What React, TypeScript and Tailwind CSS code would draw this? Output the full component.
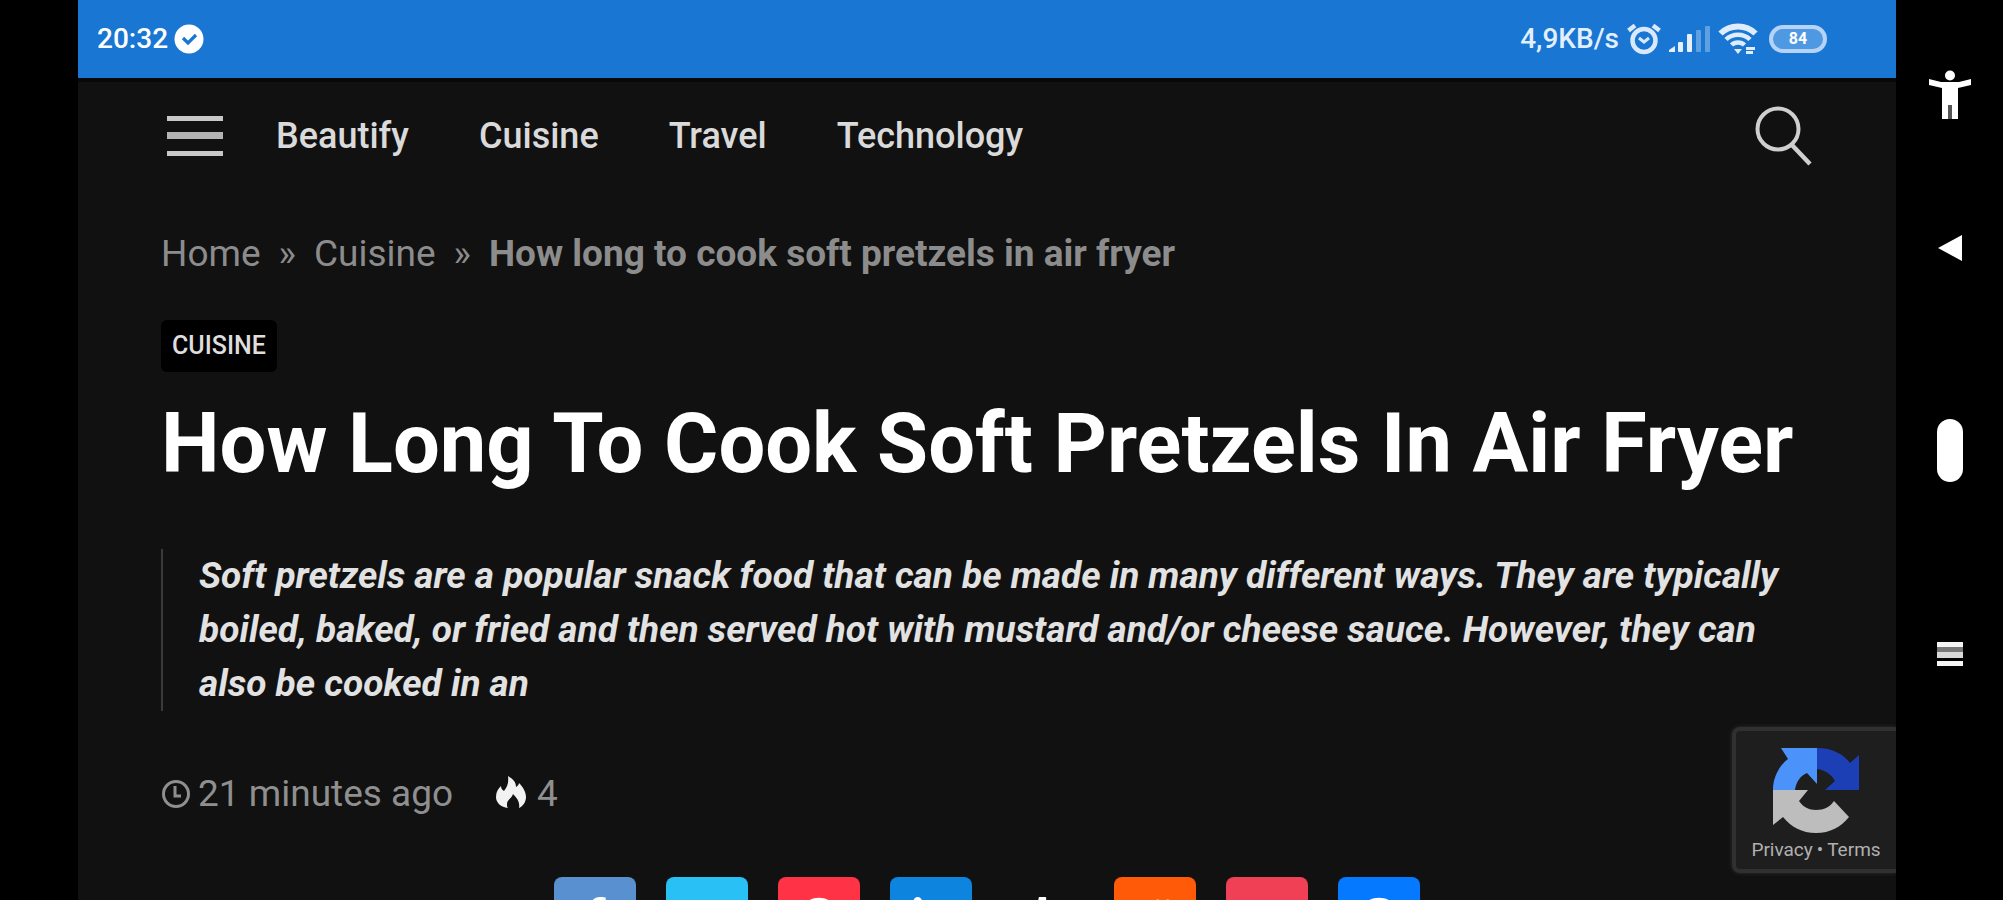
import React from "react";
import {
  FaFacebookF,
  FaFacebookMessenger,
  FaGetPocket,
  FaLinkedinIn,
  FaPinterest,
  FaRedditAlien,
  FaTumblr,
  FaTwitter,
} from "react-icons/fa";

const navLinks = ["Beautify", "Cuisine", "Travel", "Technology"];

const shareLinks = [
  { name: "Facebook", color: "bg-[#5890d0]", Icon: FaFacebookF },
  { name: "Twitter", color: "bg-[#28c0f5]", Icon: FaTwitter },
  { name: "Pinterest", color: "bg-[#ff3345]", Icon: FaPinterest },
  { name: "LinkedIn", color: "bg-[#0d84de]", Icon: FaLinkedinIn },
  { name: "Tumblr", color: "bg-[#111111]", Icon: FaTumblr },
  { name: "Reddit", color: "bg-[#ff5a08]", Icon: FaRedditAlien },
  { name: "Pocket", color: "bg-[#ef4056]", Icon: FaGetPocket },
  { name: "Messenger", color: "bg-[#0579ff]", Icon: FaFacebookMessenger },
];

function VerifiedIcon() {
  return (
    <svg viewBox="0 0 30 30" className="size-[30px]" aria-hidden="true">
      <circle cx="15" cy="15" r="14.5" fill="#fff" />
      <path d="M9 14l5 5 8-8" fill="none" stroke="#1976d3" strokeWidth="3.2" />
    </svg>
  );
}

function AlarmIcon() {
  return (
    <svg viewBox="0 0 36 32" className="h-8 w-9" fill="none" stroke="#d9e9fb" aria-hidden="true">
      <circle cx="18" cy="17.500" r="11.500" strokeWidth="4.500" />
      <path d="M2.500 7.500L9 2.500M33.500 7.500L27 2.500" strokeWidth="4.500" />
      <path d="M13 15l5 4 5-4" strokeWidth="3" />
    </svg>
  );
}

function SignalIcon() {
  return (
    <svg viewBox="0 0 42 28" className="h-7 w-[42px]" fill="#e6f0fc" aria-hidden="true">
      <path d="M0 27v-2l6-4v6z" />
      <rect x="9" y="17" width="5" height="10" rx="1" />
      <rect x="18" y="9" width="5" height="18" rx="1" />
      <rect x="27" y="5" width="5" height="22" rx="1" opacity="0.35" />
      <rect x="36" y="1" width="5" height="26" rx="1" opacity="0.35" />
    </svg>
  );
}

function WifiIcon() {
  return (
    <svg viewBox="0 0 40 32" className="h-8 w-10" fill="none" stroke="#dfecfc" aria-hidden="true">
      <path d="M2.500 10.500C12 1 28 1 37.500 10.500" strokeWidth="6" />
      <path d="M8 16.500C14.500 10 25.500 10 32 16.500" strokeWidth="4.500" />
      <path d="M13.500 22C17 18.500 23 18.500 26.500 22" strokeWidth="4.500" />
      <path d="M16 26l4 5 4-5z" fill="#dfecfc" stroke="none" />
      <path d="M28 25.500h9M28 29.500h7" strokeWidth="3" />
    </svg>
  );
}

function RecaptchaLogo() {
  return (
    <svg viewBox="0 0 88 88" className="size-[88px]" aria-hidden="true">
      <path d="M45 1v36l-10-11c-7 3-11 9-12 17H1C1 30 7 19 16 12L9 1z" fill="#4b93fa" />
      <path d="M45 1c15 0 26 6 33 15l9-8v35H53l10-9c-4-7-10-11-18-12z" fill="#1c3fb5" />
      <path d="M1 43h35l-9 11c4 6 10 9 17 9 8 0 14-3 18-9l15 16C69 80 58 86 44 86 30 86 19 80 11 70L1 78z" fill="#bdbdbd" />
    </svg>
  );
}

function StatusBar() {
  return (
    <div className="flex h-[78px] shrink-0 items-center justify-between bg-[#1976d3] pr-[69px] pl-[19px] text-white">
      <div className="flex items-center gap-[6px]">
        <span className="text-[28px] leading-8 font-medium">20:32</span>
        <VerifiedIcon />
      </div>
      <div className="flex items-center gap-[7px]">
        <span className="text-[28px] leading-8 font-medium text-[#e3effd]">4,9KB/s</span>
        <AlarmIcon />
        <SignalIcon />
        <WifiIcon />
        <span className="ml-1 flex h-7 w-[58px] items-center justify-center rounded-full border-4 border-[#b5d3f5] bg-[#4f98e2] text-[16px] leading-4 font-bold text-white">
          84
        </span>
      </div>
    </div>
  );
}

function SiteHeader() {
  return (
    <header className="flex h-[130px] shrink-0 items-center border-t-4 border-[#080808] pr-[84px] pb-[18px] pl-[89px]">
      <button type="button" aria-label="Open menu" className="mr-[53px]">
        <svg viewBox="0 0 56 42" className="h-[42px] w-14" aria-hidden="true">
          <rect width="56" height="5" y="1" fill="#c8c8c8" />
          <rect width="56" height="7" y="17" fill="#b4b4b4" />
          <rect width="56" height="5" y="36" fill="#c8c8c8" />
        </svg>
      </button>
      <nav className="flex flex-1 gap-[70px]">
        {navLinks.map((label) => (
          <a key={label} href="#" className="text-[36px] leading-[44px] font-medium text-[#dadada]">
            {label}
          </a>
        ))}
      </nav>
      <button type="button" aria-label="Search">
        <svg viewBox="0 0 58 60" className="h-[60px] w-[58px]" fill="none" stroke="#cfcfcf" aria-hidden="true">
          <circle cx="24" cy="23" r="20.500" strokeWidth="4" />
          <path d="M37 38l19 20" strokeWidth="4.500" />
        </svg>
      </button>
    </header>
  );
}

function Article() {
  return (
    <article className="flex flex-col items-start pr-[84px] pl-[83px]">
      <nav aria-label="Breadcrumb" className="mt-[24px] flex gap-[18px] text-[37px] leading-[44px] text-[#8c8c8c]">
        <a href="#">Home</a>
        <span>»</span>
        <a href="#">Cuisine</a>
        <span>»</span>
        <span className="font-bold">How long to cook soft pretzels in air fryer</span>
      </nav>
      <a
        href="#"
        className="mt-[44px] flex h-[52px] items-center rounded-md bg-black px-[11px] text-[25px] leading-8 font-medium text-[#dedede]"
      >
        CUISINE
      </a>
      <h1 className="mt-[20px] text-[83px] leading-[104px] font-bold whitespace-nowrap text-white">
        How Long To Cook Soft Pretzels In Air Fryer
      </h1>
      <blockquote className="mt-[53px] border-l-2 border-[#3a3a3a] pl-[36px] text-[37px] leading-[54px] font-bold text-[#e2e2e2] italic">
        Soft pretzels are a popular snack food that can be made in many different ways. They are typically boiled,
        baked, or fried and then served hot with mustard and/or cheese sauce. However, they can also be cooked in an
      </blockquote>
      <div className="mt-[61px] flex items-center text-[37px] leading-[44px] text-[#8f8f8f]">
        <svg viewBox="0 0 30 30" className="mr-[7px] size-[30px]" fill="none" stroke="#8f8f8f" aria-hidden="true">
          <circle cx="15" cy="15" r="12.500" strokeWidth="3" />
          <path d="M14 7v10h6" strokeWidth="3" />
        </svg>
        <span>21 minutes ago</span>
        <svg viewBox="0 0 32 32" className="mr-[10px] mb-1 ml-[42px] size-8" fill="#f2f2f2" aria-hidden="true">
          <path d="M13 0c5 3 8 6 8 11 2-1 3-3 3-4 4 4 7 9 7 14 0 5-3 9-7 11 1-5-1-9-6-14-1 4-6 6-6 10 0 2 0 3 1 4C6 31 1 27 1 21c0-5 2-8 5-11 0 2 1 4 3 5 3-4 5-8 4-15z" />
        </svg>
        <span>4</span>
      </div>
      <ul aria-label="Share" className="mt-[61px] flex gap-[30px] self-center">
        {shareLinks.map(({ name, color, Icon }) => (
          <li key={name}>
            <a
              href="#"
              aria-label={name}
              className={`flex h-[82px] w-[82px] justify-center rounded-lg pt-5 text-[40px] text-white ${color}`}
            >
              <Icon />
            </a>
          </li>
        ))}
      </ul>
    </article>
  );
}

function RecaptchaBadge() {
  return (
    <aside className="absolute right-0 bottom-[27px] flex h-[146px] w-[164px] flex-col items-center rounded-l-lg border-4 border-r-0 border-[#303030] bg-[#1e1e1e] pt-[16px] shadow-[0_0_4px_#303030]">
      <RecaptchaLogo />
      <p className="flex gap-1 text-[19px] leading-[30px] text-[#b0b0b0]">
        <a href="#">Privacy</a>
        <span>•</span>
        <a href="#">Terms</a>
      </p>
    </aside>
  );
}

function SystemNav() {
  return (
    <nav aria-label="System" className="flex w-[107px] shrink-0 flex-col items-center pt-[70px]">
      <button type="button" aria-label="Accessibility">
        <svg viewBox="0 0 44 50" className="h-[50px] w-11" fill="#fff" aria-hidden="true">
          <circle cx="22" cy="5.500" r="5" />
          <path d="M1 9l12 3h18l12-3v6l-13 3v31h-6V35h-4v14h-6V18L1 15z" />
          <path d="M20 35h4v14h-4z" fill="#555" />
        </svg>
      </button>
      <button type="button" aria-label="Back" className="mt-[114px]">
        <svg viewBox="0 0 24 28" className="h-7 w-6" fill="#fff" aria-hidden="true">
          <path d="M0 14L24 1v26z" />
        </svg>
      </button>
      <button type="button" aria-label="Home" className="mt-[157px] h-[63px] w-[26px] rounded-full bg-white" />
      <button type="button" aria-label="Recent apps" className="mt-[159px]">
        <svg viewBox="0 0 26 26" className="size-[26px]" aria-hidden="true">
          <rect width="26" height="5" y="1" fill="#f4f4f4" />
          <rect width="26" height="5" y="6" fill="#777" />
          <rect width="26" height="6" y="11" fill="#d8d8d8" />
          <rect width="26" height="5" y="20" fill="#f4f4f4" />
        </svg>
      </button>
    </nav>
  );
}

export default function App() {
  return (
    <div className="flex h-screen overflow-hidden bg-black pl-[78px] font-[Roboto,sans-serif]">
      <main className="relative flex min-w-0 flex-1 flex-col overflow-hidden bg-[#111111]">
        <StatusBar />
        <SiteHeader />
        <Article />
        <RecaptchaBadge />
      </main>
      <SystemNav />
    </div>
  );
}
